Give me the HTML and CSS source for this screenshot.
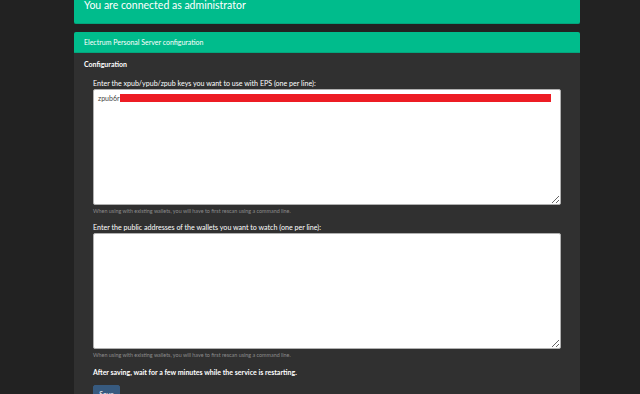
FILE: index.html
```html
<!DOCTYPE html>
<html>
<head>
<meta charset="utf-8">
<link rel="stylesheet" href="styles.css">
</head>
<body>
<div class="container">
  <div class="alert">You are connected as administrator</div>
  <div class="panel">
    <div class="panel-heading">Electrum Personal Server configuration</div>
    <div class="panel-body">
      <div class="legend">Configuration</div>
      <form class="form">
        <div class="form-group">
          <label class="label">Enter the xpub/ypub/zpub keys you want to use with EPS (one per line):</label>
          <div class="field">
            <textarea class="textarea"></textarea>
            <div class="field-value"><span class="prefix">zpub6r</span><span class="redact"></span></div>
          </div>
          <div class="help">When using with existing wallets, you will have to first rescan using a command line.</div>
        </div>
        <div class="form-group">
          <label class="label">Enter the public addresses of the wallets you want to watch (one per line):</label>
          <div class="field">
            <textarea class="textarea"></textarea>
          </div>
          <div class="help">When using with existing wallets, you will have to first rescan using a command line.</div>
        </div>
        <p class="notice">After saving, wait for a few minutes while the service is restarting.</p>
        <button type="button" class="btn">Save</button>
      </form>
    </div>
  </div>
</div>
</body>
</html>
```

FILE: styles.css
```css
html, body {
  margin: 0;
  padding: 0;
  height: 100%;
  overflow: hidden;
  background: #222222;
}
body {
  font-family: Lato, "Open Sans", sans-serif;
  color: #ffffff;
  font-size: 7px;
}
.container {
  width: 506px;
  margin-left: 74px;
}
.alert {
  margin-top: -15px;
  padding: 12px 10px 0 10px;
  font-size: 10.5px;
  line-height: 16px;
  background: #00bc8c;
  border-bottom: 1px solid #03a57c;
  border-radius: 0 0 2px 2px;
  color: #ffffff;
  box-sizing: border-box;
  height: 39px;
}
.panel {
  margin-top: 8px;
  background: #303030;
  border-radius: 2px 2px 0 0;
  height: 400px;
}
.panel-heading {
  background: #00bc8c;
  height: 21px;
  line-height: 21px;
  padding: 0 10px;
  border-radius: 2px 2px 0 0;
  border-bottom: 1px solid #04a67d;
  box-sizing: border-box;
  font-size: 7px;
}
.panel-body {
  padding: 6px 10px 0 10px;
}
.legend {
  font-weight: bold;
  line-height: 11px;
  height: 11px;
}
.form {
  padding: 9px 9px 0 9px;
}
.form-group {
  display: flex;
  flex-direction: column;
  margin-bottom: 8px;
}
.label {
  line-height: 10px;
  height: 10px;
  font-size: 7.1px;
}
.field {
  position: relative;
  height: 116px;
}
.textarea {
  display: block;
  box-sizing: border-box;
  width: 468px;
  height: 116px;
  margin: 0;
  background: #ffffff;
  border: 1px solid #b0b0b0;
  border-radius: 2px;
  padding: 4px 5px;
  font-family: Lato, sans-serif;
  font-size: 7px;
  resize: vertical;
}
.field-value {
  position: absolute;
  left: 5px;
  top: 5px;
  right: 10px;
  display: flex;
  align-items: center;
  height: 8px;
}
.prefix {
  color: #444444;
  font-size: 7px;
  line-height: 8px;
}
.redact {
  flex: 1;
  height: 8px;
  background: #ed1c24;
}
.help {
  margin-top: 2px;
  line-height: 8px;
  font-size: 5.4px;
  color: #8c8c8c;
}
.notice {
  margin: 0;
  font-weight: bold;
  line-height: 11px;
}
.btn {
  display: block;
  margin-top: 7px;
  background: #375a7f;
  border: 1px solid #375a7f;
  border-radius: 2px;
  color: #ffffff;
  font-family: Lato, sans-serif;
  font-size: 7px;
  padding: 3px 5px 6px 5px;
  line-height: 10px;
  width: 27px;
  text-align: center;
}
```
